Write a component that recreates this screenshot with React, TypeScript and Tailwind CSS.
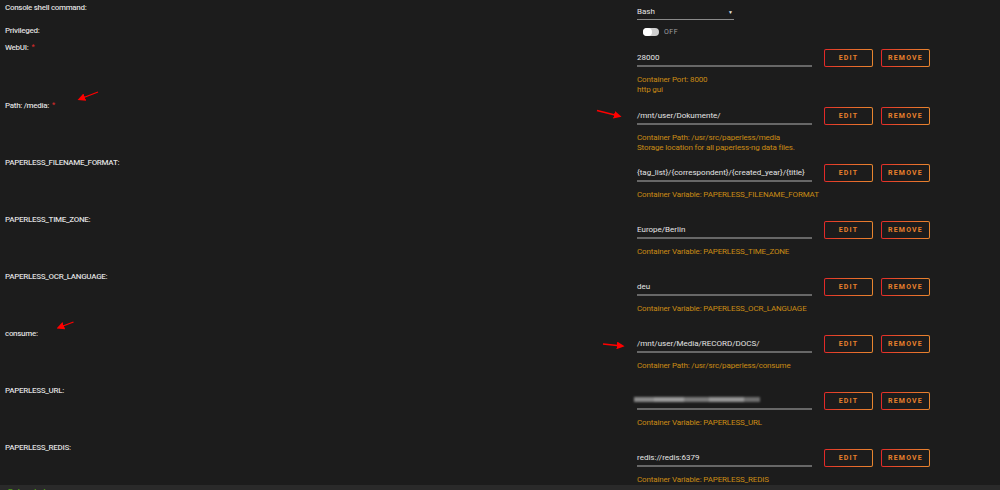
import React from 'react';

type Setting = {
    label: string;
    required?: boolean;
    value: string;
    desc: string[];
    blurred?: boolean;
    tall?: boolean;
};

const settings: Setting[] = [
    { label: 'WebUI:', required: true, value: '28000', desc: ['Container Port: 8000', 'http gui'], tall: true },
    {
        label: 'Path: /media:',
        required: true,
        value: '/mnt/user/Dokumente/',
        desc: ['Container Path: /usr/src/paperless/media', 'Storage location for all paperless-ng data files.'],
    },
    {
        label: 'PAPERLESS_FILENAME_FORMAT:',
        value: '{tag_list}/{correspondent}/{created_year}/{title}',
        desc: ['Container Variable: PAPERLESS_FILENAME_FORMAT'],
    },
    { label: 'PAPERLESS_TIME_ZONE:', value: 'Europe/Berlin', desc: ['Container Variable: PAPERLESS_TIME_ZONE'] },
    { label: 'PAPERLESS_OCR_LANGUAGE:', value: 'deu', desc: ['Container Variable: PAPERLESS_OCR_LANGUAGE'] },
    { label: 'consume:', value: '/mnt/user/Media/RECORD/DOCS/', desc: ['Container Path: /usr/src/paperless/consume'] },
    { label: 'PAPERLESS_URL:', value: '', blurred: true, desc: ['Container Variable: PAPERLESS_URL'] },
    { label: 'PAPERLESS_REDIS:', value: 'redis://redis:6379', desc: ['Container Variable: PAPERLESS_REDIS'] },
];

function GradientButton({ children }: { children: React.ReactNode }) {
    return (
        <div className="w-[49px] h-[18px] rounded-[2px] p-px bg-gradient-to-r from-[#e22828] to-[#e8862f]">
            <div className="w-full h-full rounded-[1px] bg-[#1c1c1c] flex items-center justify-center text-[7px] font-bold tracking-[1.2px] text-[#e8802c]">
                {children}
            </div>
        </div>
    );
}

function SettingRow({ s }: { s: Setting }) {
    return (
        <div className={`flex shrink-0 ${s.tall ? 'h-[58px]' : 'h-[57px]'}`}>
            <div className="w-[637px] pl-[5px] leading-[10px] text-[#dcdcdc] font-medium tracking-[-0.3px]">
                {s.label}
                {s.required && <sup className="text-[#d42a2a] text-[7px] ml-[3px] top-[-1px]">*</sup>}
            </div>
            <div className="flex flex-col">
                <div className="flex mt-[6px] h-[18px] gap-[12px]">
                    <div className="w-[175px] h-[18px] flex flex-col border-b-2 border-[#676767]">
                        {s.blurred ? (
                            <div className="mt-[5px] -ml-[3px] h-[5px] w-[126px] flex blur-[1px]">
                                <div className="w-[20px] bg-[#8a8a8a]" />
                                <div className="w-[30px] bg-[#9a9a9a]" />
                                <div className="w-[25px] bg-[#7a7a7a]" />
                                <div className="w-[35px] bg-[#959595]" />
                                <div className="w-[16px] bg-[#6e6e6e]" />
                            </div>
                        ) : (
                            <div className="pt-[4px] leading-[10px] text-[#e4e4e4] whitespace-nowrap">{s.value}</div>
                        )}
                    </div>
                    <div className="flex gap-[8px]">
                        <GradientButton>EDIT</GradientButton>
                        <GradientButton>REMOVE</GradientButton>
                    </div>
                </div>
                <div className="mt-[8px] leading-[10px] text-[#c98a14] tracking-[-0.15px]">
                    {s.desc.map((d, i) => (
                        <div key={i}>{d}</div>
                    ))}
                </div>
            </div>
        </div>
    );
}

export default function App() {
    return (
        <div className="relative w-[1000px] h-[490px] bg-[#1c1c1c] overflow-hidden flex flex-col text-[8px] font-['Roboto','Liberation_Sans',sans-serif]">
            <div className="h-[485px] overflow-hidden flex flex-col pt-[3px]">
                {/* Console shell command */}
                <div className="flex h-[23px] shrink-0">
                    <div className="w-[637px] pl-[5px] leading-[10px] text-[#dcdcdc] font-medium tracking-[-0.3px]">Console shell command:</div>
                    <div className="pt-[4px] w-[97px]">
                        <div className="flex justify-between items-center leading-[10px] text-[#e4e4e4]">
                            <span>Bash</span>
                            <span className="text-[5px] pr-[1px]">▼</span>
                        </div>
                        <div className="mt-[2px] border-b border-[#8a8a8a]" />
                    </div>
                </div>

                {/* Privileged */}
                <div className="flex h-[17px] shrink-0">
                    <div className="w-[637px] pl-[5px] leading-[10px] text-[#dcdcdc] font-medium tracking-[-0.3px]">Privileged:</div>
                    <div className="flex items-center h-[10px] pl-[6px] gap-[5px] mt-[1px]">
                        <div className="w-[16px] h-[8px] rounded-full bg-[#cfcfcf] flex items-center">
                            <div className="w-[9px] h-[8px] rounded-full bg-white" />
                        </div>
                        <span className="text-[7px] text-[#a0a0a0] tracking-[0.5px]">OFF</span>
                    </div>
                </div>

                {settings.map((s, i) => (
                    <SettingRow key={i} s={s} />
                ))}
            </div>

            {/* bottom bar */}
            <div className="h-[5px] bg-[#2a2a2a] overflow-hidden pl-[8px]">
                <div className="pt-[2px] leading-[10px] text-[#4f9a1a] font-bold">Return to top</div>
            </div>

            {/* red annotation arrows */}
            <svg className="absolute inset-0 pointer-events-none" width="1000" height="490">
                <defs>
                    <marker id="ah" markerWidth="6" markerHeight="6" refX="4" refY="3" orient="auto" markerUnits="strokeWidth">
                        <path d="M0,0 L6,3 L0,6 z" fill="#ff0000" />
                    </marker>
                </defs>
                <line x1="98" y1="92" x2="80" y2="99" stroke="#ff0000" strokeWidth="1.3" markerEnd="url(#ah)" />
                <line x1="597" y1="110.5" x2="619" y2="116" stroke="#ff0000" strokeWidth="1.3" markerEnd="url(#ah)" />
                <line x1="73.5" y1="322" x2="59" y2="327.5" stroke="#ff0000" strokeWidth="1.3" markerEnd="url(#ah)" />
                <line x1="603" y1="344" x2="622" y2="346" stroke="#ff0000" strokeWidth="1.3" markerEnd="url(#ah)" />
            </svg>
        </div>
    );
}
